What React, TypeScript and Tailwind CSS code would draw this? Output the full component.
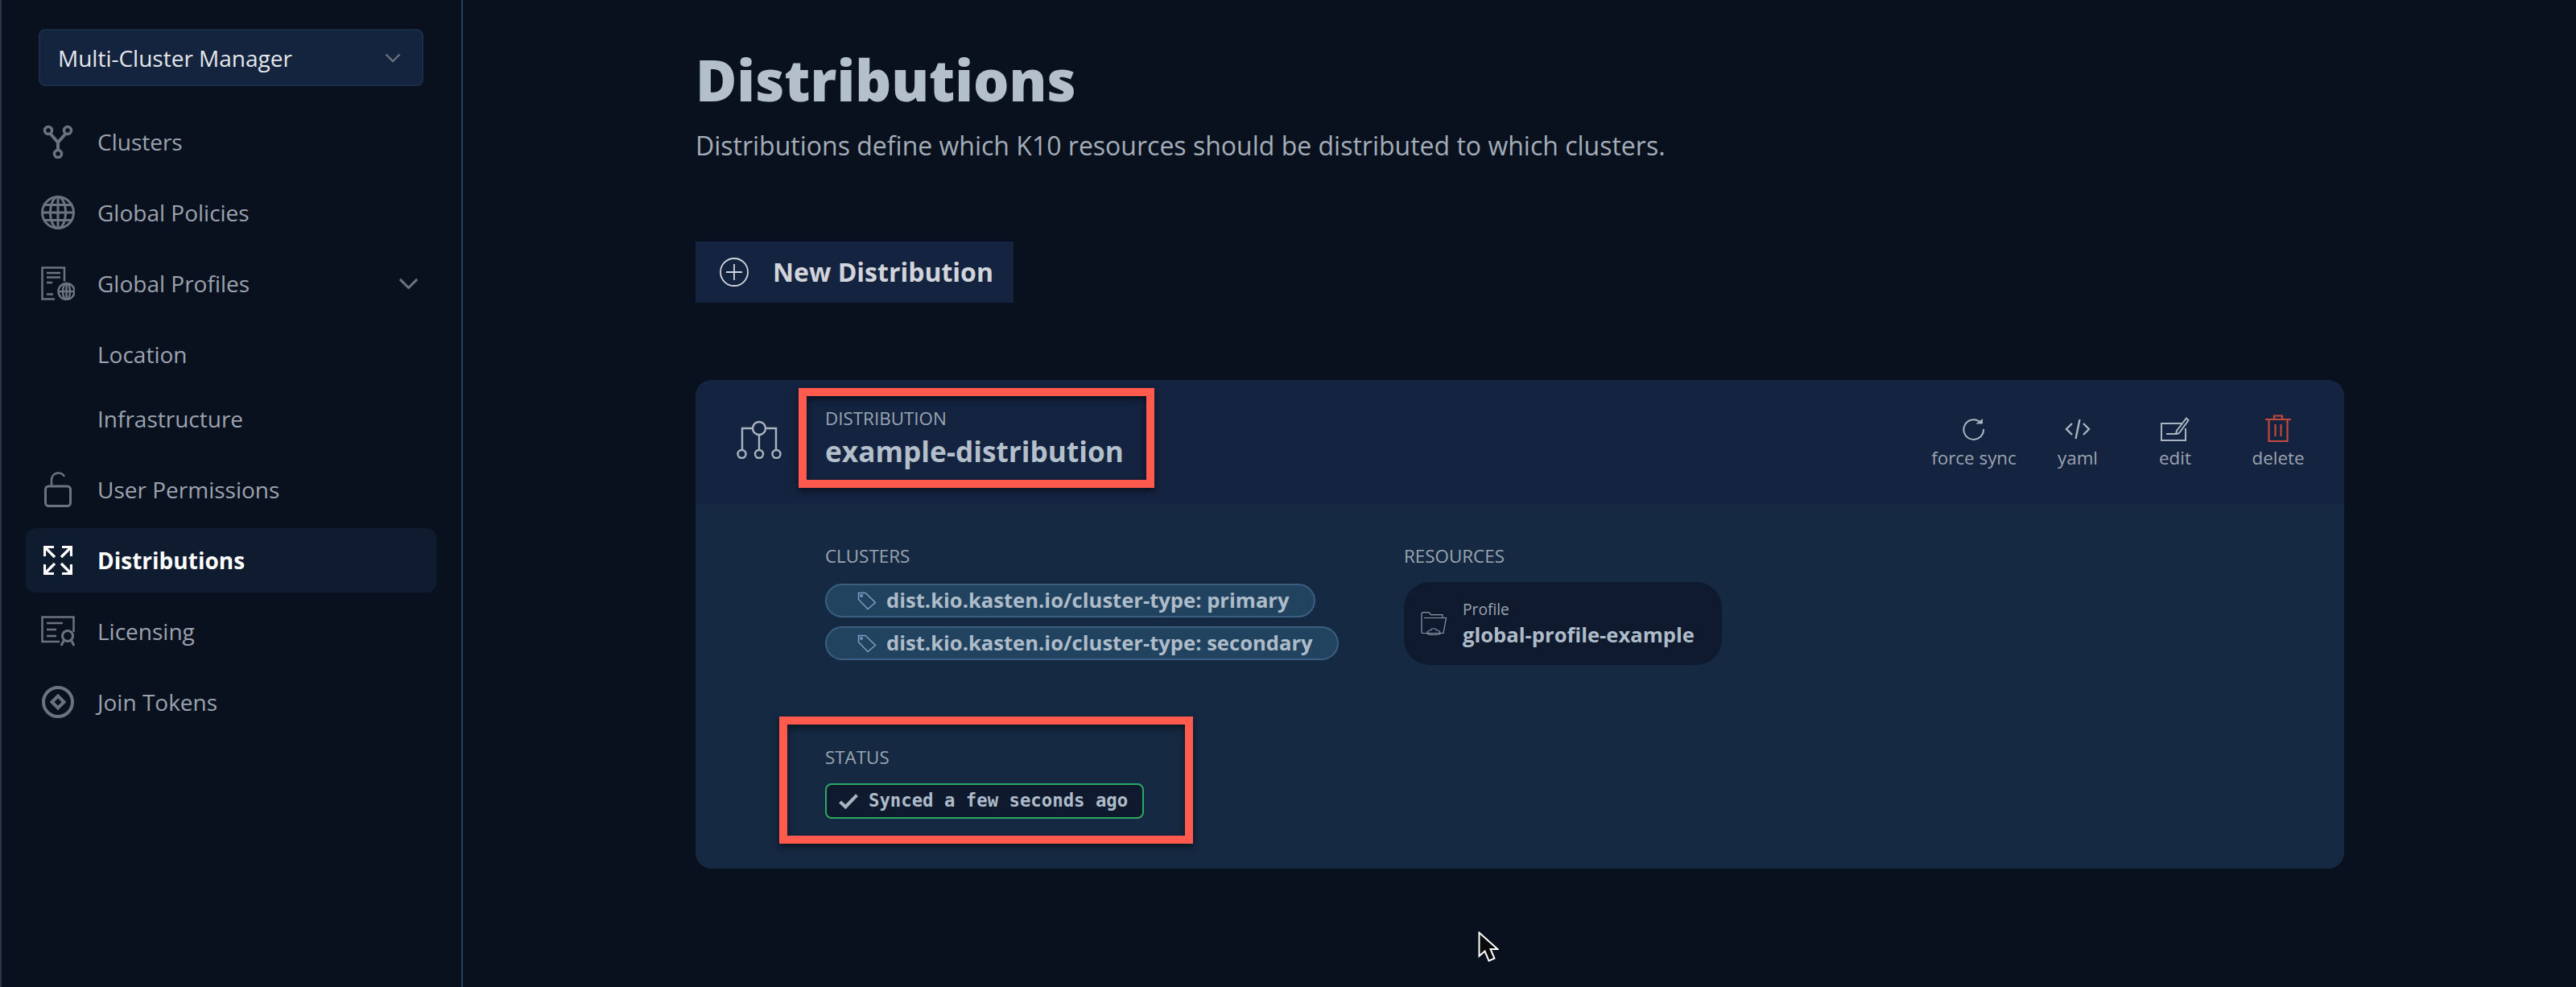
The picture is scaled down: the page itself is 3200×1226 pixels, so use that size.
import React from 'react';

const navIcon = 'text-[#6b7280]';

const ClustersIcon = () => (
  <svg width="42" height="42" viewBox="0 0 42 42" fill="none" stroke="currentColor" strokeWidth="3.500" className={navIcon}>
    <circle cx="9" cy="7" r="4.500" />
    <circle cx="33" cy="7" r="4.500" />
    <circle cx="21" cy="36" r="4.500" />
    <path d="M11.500 11 21 22l9.500-11M21 22v9.500" strokeWidth="4" />
  </svg>
);

const GlobeIcon = () => (
  <svg width="42" height="42" viewBox="0 0 42 42" fill="none" stroke="currentColor" strokeWidth="3" className={navIcon}>
    <circle cx="21" cy="21" r="19.500" />
    <ellipse cx="21" cy="21" rx="9.500" ry="19.500" />
    <path d="M21 1.500v39M1.500 21h39M4.500 11.500h33M4.500 30.500h33" />
  </svg>
);

const ProfilesIcon = () => (
  <svg width="42" height="42" viewBox="0 0 42 42" fill="none" stroke="currentColor" strokeWidth="2.500" className={navIcon}>
    <path d="M17 40.500H1.500V1.500H29v17" />
    <path d="M7 8h17M7 13.500h17M7 20h7M7 34.500h8" />
    <circle cx="31.500" cy="31" r="10" />
    <ellipse cx="31.500" cy="31" rx="4.500" ry="10" />
    <path d="M21.500 31h20M31.500 21v20" />
  </svg>
);

const LockIcon = () => (
  <svg width="34" height="44" viewBox="0 0 34 44" fill="none" stroke="currentColor" strokeWidth="3" className={navIcon}>
    <rect x="1.500" y="18" width="31" height="24.500" rx="4" />
    <path d="M9 18V10a8.500 8.500 0 0 1 16-4" strokeWidth="2.500" />
  </svg>
);

const ExpandIcon = () => (
  <svg width="36" height="36" viewBox="0 0 36 36" fill="none" stroke="#ffffff" strokeWidth="3.200">
    <path d="M1.500 13V1.500H13M1.500 1.500 14 14" />
    <path d="M34.500 13V1.500H23M34.500 1.500 22 14" />
    <path d="M1.500 23v11.500H13M1.500 34.500 14 22" />
    <path d="M34.500 23v11.500H23M34.500 34.500 22 22" />
  </svg>
);

const LicenseIcon = () => (
  <svg width="42" height="38" viewBox="0 0 42 38" fill="none" stroke="currentColor" strokeWidth="2.500" className={navIcon}>
    <path d="M23 32H1.500V1.500h39V20" />
    <path d="M7 9h20M7 17h12M7 25h12" />
    <circle cx="33" cy="25" r="6.500" strokeWidth="3" />
    <path d="M28 31l-3 6M38 31l3 6" strokeWidth="3" />
  </svg>
);

const TokenIcon = () => (
  <svg width="40" height="40" viewBox="0 0 40 40" fill="none" stroke="currentColor" className={navIcon}>
    <circle cx="20" cy="20" r="18" strokeWidth="4" />
    <path d="M20 12.500 27.500 20 20 27.500 12.500 20Z" strokeWidth="4" />
  </svg>
);

const Chevron = ({ w, h, cls }: { w: number; h: number; cls: string }) => (
  <svg width={w} height={h} viewBox="0 0 20 12" fill="none" stroke="currentColor" strokeWidth="2.400" className={cls}>
    <path d="M1.500 1.500 10 10l8.500-8.500" />
  </svg>
);

const navItems = [
  { label: 'Clusters', icon: <ClustersIcon /> },
  { label: 'Global Policies', icon: <GlobeIcon /> },
  { label: 'Global Profiles', icon: <ProfilesIcon />, open: true },
  { label: 'Location', tight: true },
  { label: 'Infrastructure' },
  { label: 'User Permissions', icon: <LockIcon /> },
  { label: 'Distributions', icon: <ExpandIcon />, active: true },
  { label: 'Licensing', icon: <LicenseIcon /> },
  { label: 'Join Tokens', icon: <TokenIcon /> },
];

const Sidebar = () => (
  <aside className="w-[575px] shrink-0 h-full border-l-2 border-l-[#2a3548] border-r-2 border-r-[#27405f] pt-9">
    <div className="ml-[46px] w-[478px] h-[71px] rounded-lg bg-[#14243f] border-2 border-[#1b2c48] flex items-center justify-between pl-[22px] pr-[26px]">
      <span className="text-[28px] text-[#e5e7eb]">Multi-Cluster Manager</span>
      <Chevron w={20} h={12} cls="text-[#6b7280]" />
    </div>
    <nav className="mt-[29px] flex flex-col">
      {navItems.map((item) => (
        <div
          key={item.label}
          className={
            'ml-[30px] w-[510px] h-20 flex items-center rounded-xl ' +
            (item.active ? 'bg-[#0f1b2f] ' : '') +
            (item.tight ? '' : 'mb-2')
          }
        >
          <div className="w-[80px] mr-[9px] shrink-0 flex items-center justify-center">{item.icon}</div>
          <span className={item.active ? 'text-[28px] font-bold text-white' : 'text-[28px] text-[#9ca3af]'}>
            {item.label}
          </span>
          {item.open && <Chevron w={27} h={15} cls="text-[#6b7280] ml-auto mr-[21px]" />}
        </div>
      ))}
    </nav>
  </aside>
);

const actionText = 'text-[22.400px] leading-[30px] text-[#9ca3af]';

const Actions = () => (
  <div className="flex items-start pr-[11px] mt-1">
    <div className="w-[130px] flex flex-col items-center">
      <svg width="28" height="28" viewBox="0 0 28 28" fill="none" stroke="#aab4c0" strokeWidth="2">
        <path d="M22 5.500A12.300 12.300 0 1 0 26 14" />
        <path d="M24.500 1.500v5.500H17" fill="#aab4c0" strokeWidth="1" />
      </svg>
      <span className={actionText + ' mt-[7px]'}>force sync</span>
    </div>
    <div className="w-[128px] flex flex-col items-center">
      <svg width="32" height="28" viewBox="0 0 32 28" fill="none" stroke="#aab4c0" strokeWidth="2.400">
        <path d="M9 7 2 14l7 7M23 7l7 7-7 7M18.500 2 13.500 26" />
      </svg>
      <span className={actionText + ' mt-[7px]'}>yaml</span>
    </div>
    <div className="w-[114px] flex flex-col items-center">
      <svg width="36" height="30" viewBox="0 0 36 30" fill="none" stroke="#aab4c0" strokeWidth="2" className="mt-[-1px]">
        <path d="M26 8H1v21h30V14" />
        <path d="M7 21h13l3-1L34.500 4 32 1.500 20 17l-1 4" />
      </svg>
      <span className={actionText + ' mt-[6px]'}>edit</span>
    </div>
    <div className="w-[142px] flex flex-col items-center">
      <svg width="32" height="34" viewBox="0 0 32 34" fill="none" stroke="#c14a3a" strokeWidth="2.200" className="mt-[-4px]">
        <path d="M0 6h32M11 6V1.500h10V6M4.500 6v27h23V6M12.500 12v15M19.500 12v15" />
      </svg>
      <span className={actionText + ' mt-[5px]'}>delete</span>
    </div>
  </div>
);

const TagIcon = () => (
  <svg width="24" height="24" viewBox="0 0 24 24" fill="none" stroke="#7f9cc4" strokeWidth="1.500" className="shrink-0">
    <path d="M1.500 2.500h8.500L22.500 14.500 13 22.500 1.500 10.500Z" />
    <circle cx="5" cy="6" r="1.300" />
  </svg>
);

const Pill = ({ text }: { text: string }) => (
  <div className="h-[42px] w-fit rounded-full bg-[#21435f] border-2 border-[#3a5f80] flex items-center pl-[38px] pr-[30px]">
    <TagIcon />
    <span className="ml-[12px] text-[25.600px] font-bold text-[#aebcc9] whitespace-nowrap">{text}</span>
  </div>
);

const sectionLabel = 'text-[22.400px] leading-[30px] text-[#9aa5b1]';

const Card = () => (
  <div className="relative mt-[96px] w-[2048px] h-[607px] rounded-[20px] bg-[#152942]">
    <div className="h-[154px] rounded-t-[20px] bg-[#14233f] flex items-center justify-between">
      <div className="flex items-center pl-[51px]">
        <svg width="56" height="48" viewBox="0 0 56 48" fill="none" stroke="#aab4c0" strokeWidth="2.400" className="shrink-0 mb-[6px]">
          <circle cx="28" cy="10" r="8" />
          <path d="M20 10H7v27M36 10h13v27M28 18v19" />
          <circle cx="6.500" cy="42" r="5" />
          <circle cx="28" cy="42" r="5" />
          <circle cx="49.500" cy="42" r="5" />
        </svg>
        <div className="ml-[54px] mb-[10px]">
          <div className={sectionLabel}>DISTRIBUTION</div>
          <div className="mt-[2px] text-[35.200px] leading-[46px] font-bold text-[#b3bfca]">example-distribution</div>
        </div>
      </div>
      <Actions />
    </div>
    <div className="pl-[161px] pt-[50px]">
      <div className="flex">
        <div className="w-[719px]">
          <div className={sectionLabel}>CLUSTERS</div>
          <div className="mt-[19px] flex flex-col gap-[11px]">
            <Pill text="dist.kio.kasten.io/cluster-type: primary" />
            <Pill text="dist.kio.kasten.io/cluster-type: secondary" />
          </div>
        </div>
        <div>
          <div className={sectionLabel}>RESOURCES</div>
          <div className="mt-[17px] w-[395px] h-[103px] rounded-[32px] bg-[#0f1a2e] flex items-center pl-[21px]">
            <svg width="32" height="30" viewBox="0 0 32 30" fill="none" stroke="#8d99a8" strokeWidth="1.200" className="shrink-0">
              <path d="M1 26V2.500C1 1 2 .6 3 .6h7l2.500 3H27v3.400" />
              <path d="M4 7.500h27.500L28 26.500H1M8 27c0-3 2-4 4-4 1-3 7-3 8 0 2 0 4 1 4 4-1 2-15 2-16 0Z" />
            </svg>
            <div className="ml-[20px]">
              <div className="text-[19.200px] leading-[28px] text-[#9aa5b1]">Profile</div>
              <div className="text-[25.600px] leading-[36px] font-bold text-[#aebcc9]">global-profile-example</div>
            </div>
          </div>
        </div>
      </div>
      <div className="mt-[100px]">
        <div className={sectionLabel}>STATUS</div>
        <div className="mt-[17px] w-[396px] h-[44px] rounded-lg bg-[#0f1a2e] border-2 border-[#2ca866] flex items-center pl-[15px]">
          <svg width="24" height="19" viewBox="0 0 23 18" fill="none" stroke="#aab4c0" strokeWidth="4" className="shrink-0">
            <path d="M1.500 9.500 8 15.500 21.500 1.500" />
          </svg>
          <span className="ml-[13px] font-['DejaVu_Sans_Mono',monospace] font-bold text-[22.300px] text-[#aebcc9] whitespace-nowrap">
            Synced a few seconds ago
          </span>
        </div>
      </div>
    </div>
    <div className="absolute left-[128px] top-[10px] w-[442px] h-[124px] border-[10px] border-[#ff5a4d] shadow-[0_4px_8px_rgba(0,0,0,0.5),inset_0_4px_8px_rgba(0,0,0,0.5)]" />
    <div className="absolute left-[104px] top-[418px] w-[514px] h-[158px] border-[10px] border-[#ff5a4d] shadow-[0_4px_8px_rgba(0,0,0,0.5),inset_0_4px_8px_rgba(0,0,0,0.5)]" />
  </div>
);

export default function App() {
  return (
    <div className="relative w-[3200px] h-[1226px] overflow-hidden flex bg-[#0a111e] font-['Open_Sans',sans-serif]">
      <Sidebar />
      <main className="pl-[289px] pt-[59px]">
        <h1 className="text-[70px] leading-[80px] font-extrabold text-[#b3bfca]">Distributions</h1>
        <p className="mt-[20px] text-[32px] leading-[44px] text-[#a3adb8]">
          Distributions define which K10 resources should be distributed to which clusters.
        </p>
        <button className="mt-[97px] w-[395px] h-[76px] bg-[#142440] flex items-center pl-[30px]">
          <svg width="36" height="36" viewBox="0 0 36 36" fill="none" stroke="#d1d5db" strokeWidth="1.800" className="shrink-0">
            <circle cx="18" cy="18" r="17" />
            <path d="M18 8v20M8 18h20" />
          </svg>
          <span className="ml-[30px] text-[32px] font-bold text-[#d1d5db]">New Distribution</span>
        </button>
        <Card />
      </main>
      <svg width="26" height="38" viewBox="0 0 26 38" className="absolute left-[1836px] top-[1157px]" fill="#0a0a0a" stroke="#ffffff" strokeWidth="2">
        <path d="M1.500 1.500v29l7-6 5 12 7-3-5-11.500h9Z" />
      </svg>
    </div>
  );
}
